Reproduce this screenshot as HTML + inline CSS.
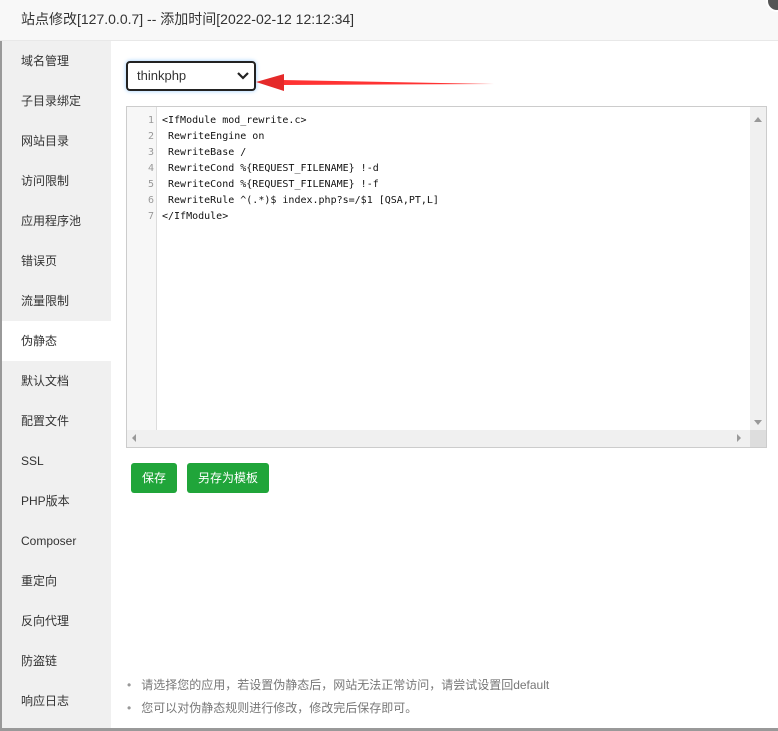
<!DOCTYPE html>
<html><head><meta charset="utf-8"><style>
*{margin:0;padding:0;box-sizing:border-box}
body{width:778px;height:731px;overflow:hidden;background:#fff;font-family:"Liberation Sans","Noto Sans CJK SC",sans-serif;position:relative}
.hdr{position:absolute;left:0;top:0;width:778px;height:41px;background:#f8f8f8;border-bottom:1px solid #e8e8e8;font-size:14px;color:#333;padding:9px 0 0 21px}
.close{position:absolute;right:-10px;top:-10px;width:22px;height:22px;border-radius:50%;background:#555;border:2px solid #fff}
.side{position:absolute;left:0;top:41px;width:111px;height:687px;background:#f0f0f0;border-left:2px solid #999}
.side div{height:40px;line-height:40px;padding-left:19px;font-size:12px;color:#333}
.side .act{background:#fff}
.sel{position:absolute;left:126px;top:61px;width:130px;height:30px;border:2px solid #222;border-radius:4px;box-shadow:0 0 4px #9cf;font-size:13px;color:#333;padding:5px 0 0 9px}
.sel svg{position:absolute;right:5px;top:9px}
.ed{position:absolute;left:126px;top:106px;width:641px;height:342px;border:1px solid #ccc;background:#fff}
.gut{position:absolute;left:0;top:0;width:30px;height:324px;background:#f7f7f7;border-right:1px solid #ddd}
.code{position:absolute;left:0;top:6px;font-family:"DejaVu Sans Mono","Liberation Mono",monospace;font-size:10px;line-height:16px;color:#111;white-space:pre}
.code span{display:inline-block;width:27px;text-align:right;color:#999;margin-right:8px}
.vs{position:absolute;right:0;top:0;width:16px;height:324px;background:#f0f0f0}
.hs{position:absolute;left:0;bottom:0;width:624px;height:17px;background:#f0f0f0}
.cn{position:absolute;right:0;bottom:0;width:16px;height:17px;background:#ddd}
.ar{position:absolute;width:0;height:0}
.btn{position:absolute;top:463px;height:30px;background:#20a53a;color:#fff;font-size:12px;line-height:30px;text-align:center;border-radius:3px}
.tips{position:absolute;left:127px;top:674px;font-size:12px;color:#777;line-height:23px}
.tips div:before{content:"•";color:#999;margin-right:10px}
.bot{position:absolute;left:0;top:728px;width:778px;height:3px;background:#999}
</style></head><body>
<div class="hdr">站点修改[127.0.0.7] -- 添加时间[2022-02-12 12:12:34]</div>
<div class="close"></div>
<div class="side">
<div>域名管理</div><div>子目录绑定</div><div>网站目录</div><div>访问限制</div><div>应用程序池</div><div>错误页</div><div>流量限制</div><div class="act">伪静态</div><div>默认文档</div><div>配置文件</div><div>SSL</div><div>PHP版本</div><div>Composer</div><div>重定向</div><div>反向代理</div><div>防盗链</div><div>响应日志</div>
</div>
<div class="sel">thinkphp<svg width="12" height="8" viewBox="0 0 12 8"><path d="M1 1l5 5 5-5" stroke="#222" stroke-width="2.2" fill="none"/></svg></div>
<svg style="position:absolute;left:254px;top:72px" width="245" height="22"><path d="M240 12 L28 8 L28 13 Z" fill="#f33"/><path d="M2 10 L30 2 L30 19 Z" fill="#e52a2a"/></svg>
<div class="ed"><div class="gut"></div>
<div class="code"><span>1</span>&lt;IfModule mod_rewrite.c&gt;
<span>2</span> RewriteEngine on
<span>3</span> RewriteBase /
<span>4</span> RewriteCond %{REQUEST_FILENAME} !-d
<span>5</span> RewriteCond %{REQUEST_FILENAME} !-f
<span>6</span> RewriteRule ^(.*)$ index.php?s=/$1 [QSA,PT,L]
<span>7</span>&lt;/IfModule&gt;</div>
<div class="vs"></div><div class="hs"></div><div class="cn"></div>
<div class="ar" style="right:4px;top:10px;border:4px solid transparent;border-bottom:5px solid #999;border-top:0"></div>
<div class="ar" style="right:4px;top:313px;border:4px solid transparent;border-top:5px solid #999;border-bottom:0"></div>
<div class="ar" style="left:5px;bottom:5px;border:4px solid transparent;border-right:4px solid #999;border-left:0"></div>
<div class="ar" style="left:610px;bottom:5px;border:4px solid transparent;border-left:4px solid #999;border-right:0"></div>
</div>
<div class="btn" style="left:131px;width:46px">保存</div>
<div class="btn" style="left:187px;width:82px">另存为模板</div>
<div class="tips"><div>请选择您的应用，若设置伪静态后，网站无法正常访问，请尝试设置回default</div><div>您可以对伪静态规则进行修改，修改完后保存即可。</div></div>
<div class="bot"></div>
</body></html>
